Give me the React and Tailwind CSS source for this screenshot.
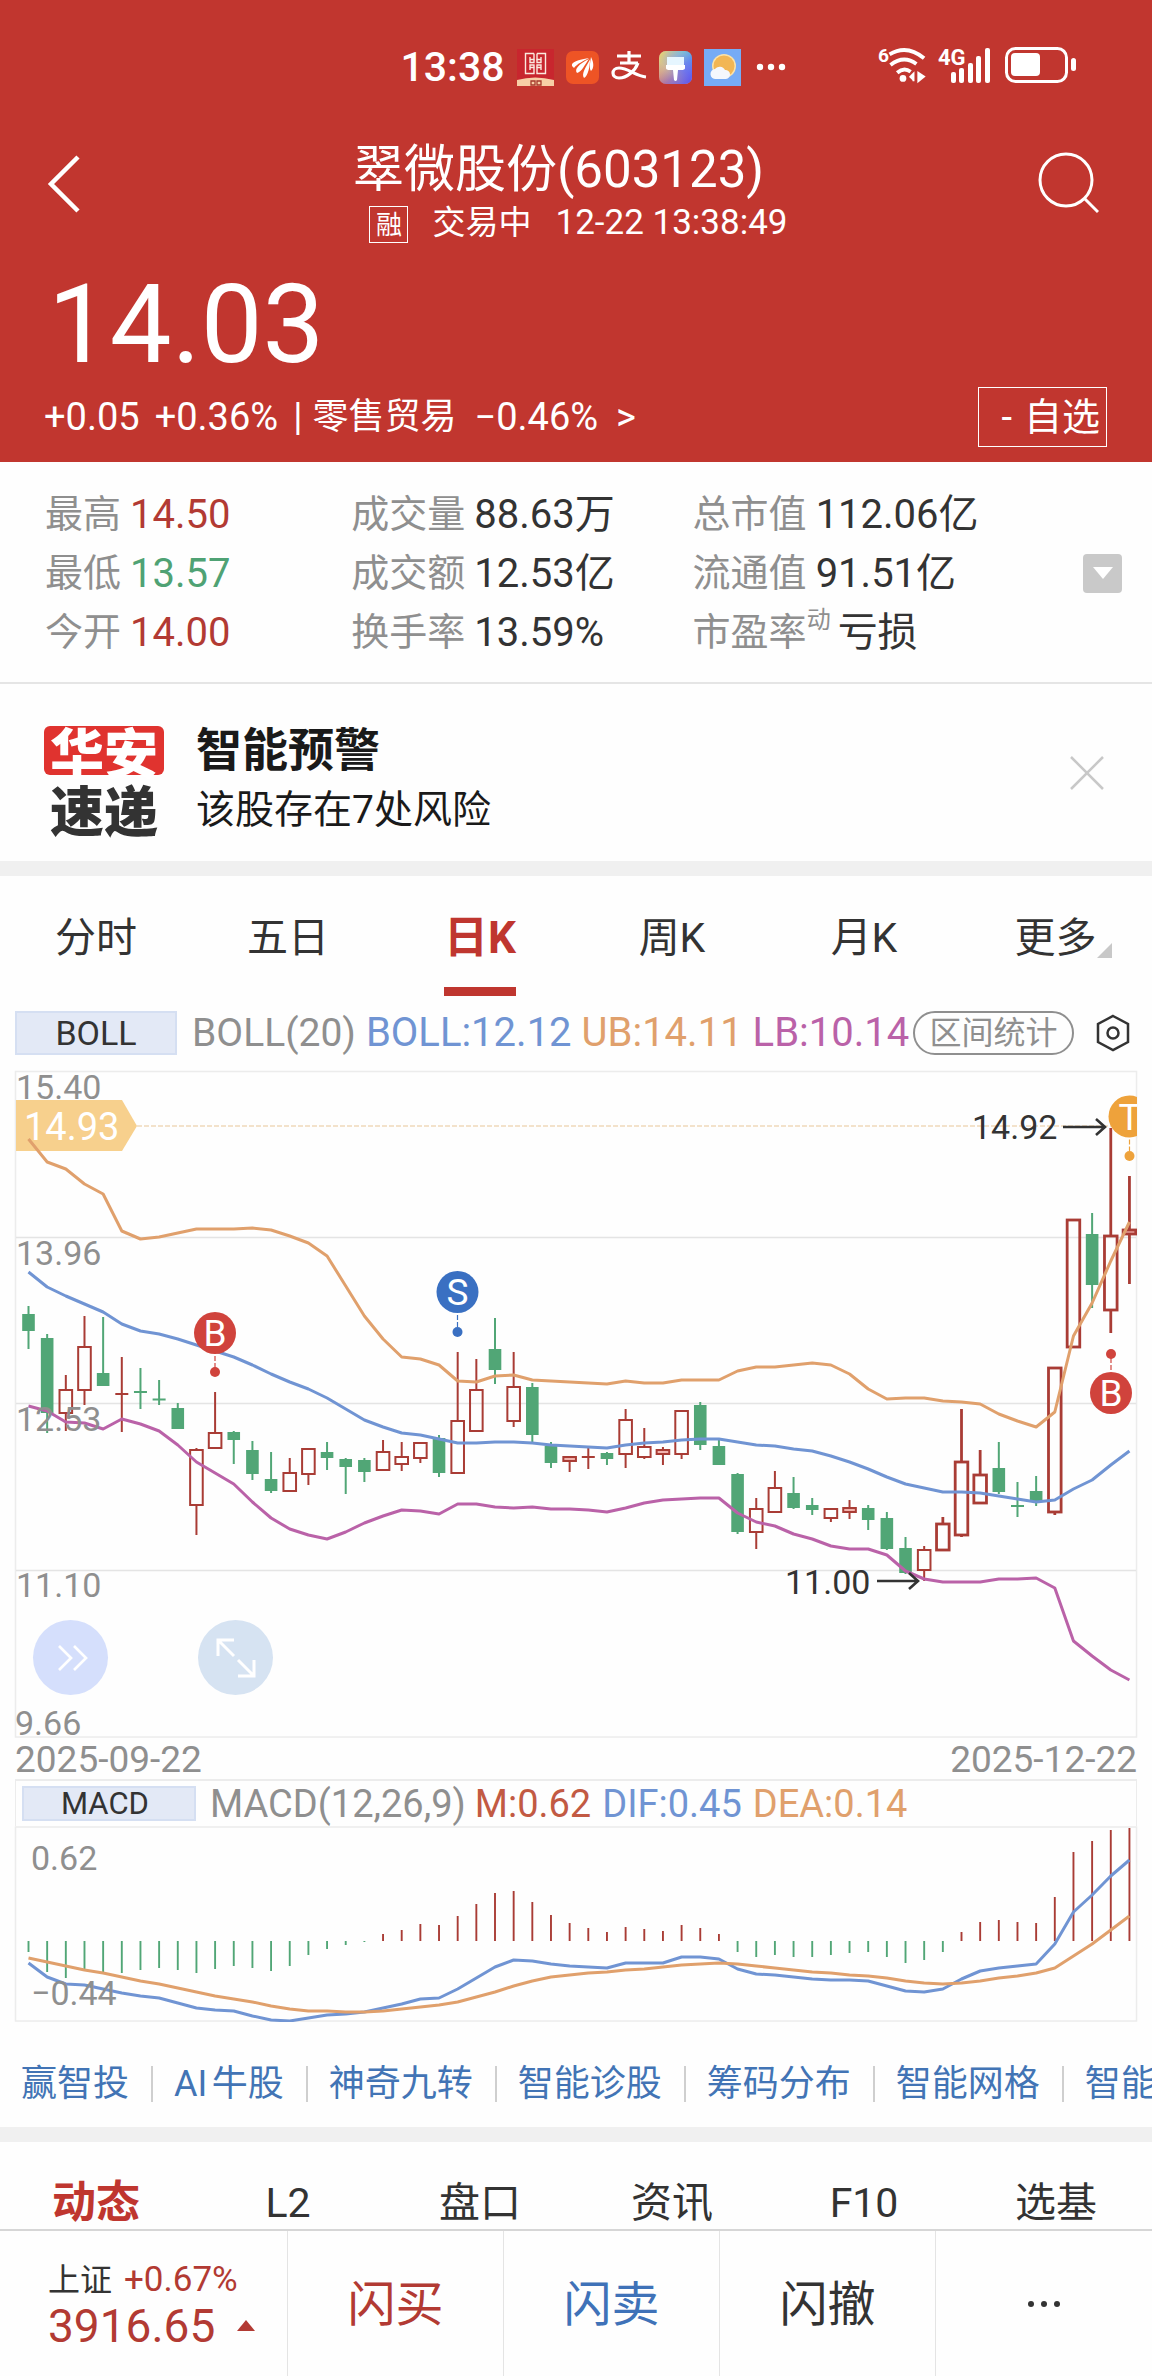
import React from "react";

const STEP = 18.66;
const X0 = 28.5;
const xAt = (i) => X0 + STEP * i;

// [direction, high, body top, body bottom, low]
const CANDLES = [
  ["g", 246, 254, 271, 289], ["g", 274, 278, 353, 373], ["r", 315, 330, 353, 371], ["r", 256, 287, 330, 345],
  ["g", 257, 313, 326, 326], ["r", 297, 334, 334, 372], ["g", 308, 332, 332, 349], ["g", 320, 339, 340, 345],
  ["g", 343, 348, 369, 369], ["r", 388, 390, 445, 475], ["r", 332, 373, 388, 388], ["g", 371, 372, 380, 404],
  ["g", 381, 390, 414, 420], ["g", 392, 419, 431, 433], ["r", 398, 413, 431, 432], ["r", 388, 389, 414, 425],
  ["g", 382, 392, 398, 410], ["g", 398, 399, 407, 434], ["g", 398, 400, 412, 422], ["r", 380, 392, 410, 410],
  ["r", 382, 397, 404, 411], ["r", 383, 383, 398, 403], ["g", 375, 378, 413, 417], ["r", 292, 361, 413, 413],
  ["r", 299, 330, 371, 371], ["g", 258, 289, 310, 324], ["r", 292, 327, 361, 367], ["g", 323, 327, 375, 382],
  ["g", 382, 386, 403, 408], ["r", 396, 397, 401, 412], ["r", 387, 397, 397, 409], ["g", 392, 393, 399, 405],
  ["r", 349, 360, 394, 408], ["r", 368, 387, 397, 399], ["r", 387, 390, 394, 405], ["r", 350, 351, 394, 399],
  ["g", 342, 345, 385, 390], ["g", 379, 386, 405, 405], ["g", 413, 414, 472, 474], ["r", 438, 449, 472, 489],
  ["r", 411, 428, 452, 452], ["g", 417, 433, 448, 449], ["g", 438, 445, 450, 455], ["r", 449, 449, 458, 462],
  ["r", 440, 448, 452, 459], ["g", 445, 448, 460, 470], ["g", 452, 458, 489, 490], ["g", 477, 488, 513, 514],
  ["r", 486, 490, 510, 521], ["r", 457, 464, 490, 490], ["r", 349, 402, 475, 477], ["r", 390, 415, 443, 443],
  ["g", 382, 408, 432, 434], ["g", 422, 445, 447, 457], ["g", 416, 431, 442, 446], ["r", 308, 308, 452, 455],
  ["r", 160, 160, 287, 287], ["g", 153, 174, 225, 248], ["r", 68, 176, 250, 273], ["r", 116, 170, 174, 224],
];

const UB = [79, 102, 109, 124, 134, 171, 179, 177, 173, 169, 169, 169, 168, 170, 176, 183, 196, 226, 256, 279, 297, 299, 305, 321, 322, 316, 315, 320, 321, 322, 323, 324, 321, 323, 323, 320, 320, 320, 311, 307, 307, 305, 303, 305, 314, 329, 339, 338, 338, 341, 342, 344, 354, 361, 367, 352, 276, 243, 201, 162];
const MID = [212, 227, 236, 244, 252, 264, 271, 274, 279, 285, 291, 297, 305, 314, 322, 329, 338, 349, 360, 367, 373, 375, 379, 383, 383, 382, 382, 383, 385, 386, 387, 388, 385, 383, 382, 380, 379, 379, 382, 385, 386, 389, 391, 396, 402, 409, 417, 424, 428, 432, 432, 433, 436, 439, 442, 440, 429, 420, 405, 391];
const LB = [346, 351, 362, 363, 369, 359, 364, 371, 385, 402, 413, 424, 442, 458, 469, 475, 479, 472, 463, 456, 450, 451, 454, 444, 444, 447, 448, 447, 449, 449, 450, 452, 448, 443, 440, 439, 438, 438, 453, 462, 466, 474, 479, 486, 489, 489, 495, 511, 519, 522, 522, 522, 519, 519, 518, 528, 581, 596, 610, 620];

const MACD_BARS = [126, 146, 152, 143, 146, 147, 144, 142, 144, 147, 143, 140, 142, 145, 140, 129, 123, 119, 116, 108, 104, 98, 99, 90, 78, 67, 65, 76, 89, 97, 102, 106, 101, 103, 105, 99, 102, 108, 126, 131, 129, 131, 131, 129, 127, 126, 131, 137, 134, 126, 106, 96, 94, 96, 97, 71, 26, 15, 4, 2];
const DIF = [137, 151, 158, 159, 163, 167, 170, 172, 177, 182, 184, 185, 190, 194, 195, 192, 189, 188, 186, 182, 178, 173, 172, 163, 152, 141, 134, 135, 138, 140, 141, 142, 137, 137, 137, 131, 131, 133, 143, 148, 149, 151, 153, 154, 154, 155, 160, 165, 166, 163, 153, 145, 142, 140, 138, 118, 86, 69, 50, 34];
const DEA = [132, 136, 140, 144, 147, 151, 155, 158, 162, 166, 170, 173, 176, 180, 183, 185, 185, 186, 186, 185, 183, 181, 179, 176, 171, 166, 160, 155, 151, 149, 147, 146, 144, 143, 141, 139, 138, 137, 138, 140, 142, 144, 146, 147, 149, 150, 152, 155, 157, 158, 157, 155, 152, 150, 147, 142, 130, 118, 104, 90];

const RED = "#a93c35";
const GREEN = "#51a676";

function Series({ data, color }) {
  const points = data.map((y, i) => `${xAt(i)},${y}`).join(" ");
  return <polyline points={points} fill="none" stroke={color} strokeWidth="3" strokeLinejoin="round" />;
}

function Candle({ index, data }) {
  const [dir, high, top, bottom, low] = data;
  const x = xAt(index);
  const color = dir === "g" ? GREEN : RED;
  const w = index > 48 && dir === "r" ? 2.8 : 2;
  if (bottom - top < 3) {
    return (
      <g stroke={color} strokeWidth={w}>
        <line x1={x} x2={x} y1={high} y2={low} />
        <line x1={x - 6.5} x2={x + 6.5} y1={(top + bottom) / 2} y2={(top + bottom) / 2} strokeWidth={w} />
      </g>
    );
  }
  return (
    <g stroke={color} strokeWidth={w}>
      <line x1={x} x2={x} y1={high} y2={top} />
      <line x1={x} x2={x} y1={bottom} y2={low} />
      {dir === "g" ? (
        <rect x={x - 6.3} y={top} width="12.6" height={bottom - top} fill={color} stroke="none" />
      ) : (
        <rect x={x - 6.3} y={top} width="12.6" height={bottom - top} fill={bottom - top < 5 ? "#f2b3ad" : "none"} />
      )}
    </g>
  );
}

function Marker({ x, y, dot, color, label }) {
  const from = dot > y ? y + 23 : y - 23;
  return (
    <g>
      <circle cx={x} cy={y} r="21" fill={color} />
      <line x1={x} x2={x} y1={from} y2={dot} stroke={color} strokeWidth="1.2" strokeDasharray="5 2" />
      <circle cx={x} cy={dot} r="5" fill={color} />
      <text x={x} y={y + 13} textAnchor="middle" fontSize="37" fill="#fff">{label}</text>
    </g>
  );
}

function Arrow({ x1, x2, y }) {
  return (
    <path d={`M${x1} ${y}H${x2}M${x2 - 9} ${y - 8}L${x2} ${y}L${x2 - 9} ${y + 8}`} fill="none" stroke="#333" strokeWidth="2.6" />
  );
}

function KChart() {
  return (
    <svg viewBox="0 0 1152 678" className="block w-full overflow-visible" role="img" aria-label="日K线图">
      <defs>
        <clipPath id="plot"><rect x="15" y="0" width="1122" height="678" /></clipPath>
      </defs>
      <g fill="none" stroke="#ececec" strokeWidth="1.5">
        <rect x="15.5" y="11.5" width="1121" height="665.5" />
        <path d="M16 177.5H1136M16 343.5H1136M16 510.5H1136" stroke="#e4e4e4" />
      </g>
      {CANDLES.map((c, i) => <g key={i} clipPath="url(#plot)"><Candle index={i} data={c} /></g>)}
      <Series data={MID} color="#7094d3" />
      <Series data={LB} color="#ba62a8" />
      <path d="M137 66H1128" stroke="#efd9ba" strokeWidth="1.5" strokeDasharray="5 2" />
      <path d="M16 40H122L137 66L122 91H16Z" fill="#f7d08d" />
      <Series data={UB} color="#e0a06c" />
      <text x="24" y="80" fontSize="38" fill="#fff">14.93</text>
      <g fontSize="34" fill="#8f8f8f">
        <text x="16" y="39">15.40</text>
        <text x="16" y="205">13.96</text>
        <text x="16" y="371">12.53</text>
        <text x="16" y="537">11.10</text>
        <text x="15" y="675">9.66</text>
      </g>
      <g fontSize="34" fill="#333">
        <text x="972" y="79">14.92</text>
        <text x="785" y="534">11.00</text>
      </g>
      <Arrow x1={1063} x2={1105} y={67} />
      <Arrow x1={877} x2={918} y={521} />
      <Marker x={215} y={273} dot={312} color="#d0433c" label="B" />
      <Marker x={457.5} y={232} dot={272} color="#3a70c2" label="S" />
      <Marker x={1111} y={333} dot={294} color="#d0433c" label="B" />
      <g clipPath="url(#plot)">
        <Marker x={1129.5} y={56.5} dot={96} color="#eea23b" label="T" />
      </g>
    </svg>
  );
}

function MacdChart() {
  return (
    <svg viewBox="0 0 1152 196" className="block w-full" role="img" aria-label="MACD">
      <rect x="15.5" y="1" width="1121" height="194" fill="none" stroke="#ececec" strokeWidth="1.5" />
      {MACD_BARS.map((y, i) => (
        <line key={i} x1={xAt(i)} x2={xAt(i)} y1="115" y2={y} stroke={y > 115 ? GREEN : RED} strokeWidth="1.9" />
      ))}
      <Series data={DIF} color="#7094d3" />
      <Series data={DEA} color="#e0a06c" />
      <g fontSize="34" fill="#8f8f8f">
        <text x="31" y="44">0.62</text>
        <text x="31" y="179">−0.44</text>
      </g>
    </svg>
  );
}

function StatusBar() {
  return (
    <div className="grid h-[130px] grid-cols-[1fr_auto_1fr] items-center">
      <span />
      <div className="flex items-center gap-3 pt-1 pl-[34px]">
        <span className="text-[41px] leading-[48px] font-medium">13:38</span>
        <svg width="37" height="37" viewBox="0 0 37 37">
          <rect width="37" height="37" fill="#c8262e" />
          <g fill="none" stroke="#fbe9df" strokeWidth="1.4">
            <path d="M17 4.500H8.500V24.500H17V18.500H13M20 4.500H28.500V24.500H20V18.500H24M17 4.500V10.500H13M20 4.500V10.500H24" />
            <path d="M13 8V13.500H17V10.500M24 8V13.500H20V10.500M13 21V16H17V18.500M24 21V16H20V18.500" />
          </g>
          <path d="M0 31Q18 26 37 31V37H0Z" fill="#f8cfa6" />
          <path d="M14 32h4v4h-4zM20 32h4v4h-4z" fill="none" stroke="#a5382c" strokeWidth="1.3" />
        </svg>
        <svg width="33" height="33" viewBox="0 0 33 33">
          <rect width="33" height="33" rx="7" fill="#ee5425" />
          <g fill="#fff">
            <path d="M6 15C5 11 12 9 23 7C17 10 11 13 8 17Z" />
            <path d="M11 22C8 18 13 13 23 8C19 13 16 21 11 22Z" />
            <path d="M18 27C15 23 20 16 24 8.500C24 15 22 25 18 27Z" />
            <path d="M25 20C23 18 24 12 25 6C28 12 28 17 25 20Z" />
          </g>
        </svg>
        <svg width="36" height="34" viewBox="0 0 36 34" fill="none" stroke="#fff" strokeWidth="3.200">
          <path d="M6 6H30M18 1V13M9 13H27" />
          <path d="M27 13C24 21 16 28 8 28C0 28 0 18 8 18C17 18 25 26 35 27" />
        </svg>
        <svg width="33" height="33" viewBox="0 0 33 33">
          <defs>
            <linearGradient id="brush" x1="0" y1="1" x2="1" y2="0">
              <stop offset="0" stopColor="#f4655c" /><stop offset=".35" stopColor="#e9a08a" /><stop offset=".6" stopColor="#8f8fe8" /><stop offset="1" stopColor="#4cc4ee" />
            </linearGradient>
            <linearGradient id="brushTop" x1="0" y1="0" x2="1" y2="1">
              <stop offset="0" stopColor="#f9d85c" /><stop offset=".35" stopColor="#b0d8b0" stopOpacity=".4" /><stop offset=".6" stopColor="#5a6cf0" stopOpacity=".5" /><stop offset="1" stopColor="#5a50f0" />
            </linearGradient>
          </defs>
          <rect width="33" height="33" rx="7" fill="url(#brush)" />
          <rect width="33" height="33" rx="7" fill="url(#brushTop)" />
          <path d="M8 6H25V14H8Z" fill="#e6f6ff" />
          <path d="M7 14H26V17Q26 19 22 19H19L18 29Q16.500 31 15 29L14 19H11Q7 19 7 17Z" fill="#fff" />
        </svg>
        <svg width="37" height="37" viewBox="0 0 37 37">
          <rect width="37" height="37" fill="#76abf5" />
          <circle cx="20" cy="17" r="12" fill="#fbe2a8" />
          <circle cx="20" cy="17" r="10.500" fill="#f2b654" />
          <path d="M12 30a5 5 0 0 1-1-10a6 6 0 0 1 10 1a4.500 4.500 0 0 1 1 9Z" fill="#f4f7fd" />
        </svg>
        <svg width="33" height="8" viewBox="0 0 33 8" fill="#fff">
          <circle cx="7" cy="4" r="3.200" /><circle cx="18" cy="4" r="3.200" /><circle cx="29" cy="4" r="3.200" />
        </svg>
      </div>
      <div className="flex items-center justify-end gap-3 pr-[76px]">
        <svg width="48" height="38" viewBox="0 0 50 38" className="overflow-visible" fill="none" stroke="#fff" strokeWidth="4">
          <text x="0" y="16" fontSize="20" fontWeight="700" fill="#fff" stroke="none">6</text>
          <path d="M12 8Q30 -3 48 12M13 19Q27 8 40 18M20 27Q27 21 34 26" />
          <circle cx="26" cy="33" r="3.500" fill="#fff" stroke="none" />
          <path d="M37 36V28l-4 4M42 27v9l6-5z" strokeWidth="2" fill="#fff" />
        </svg>
        <svg width="54" height="38" viewBox="0 0 54 38" fill="#fff" className="overflow-visible">
          <text x="0" y="19" fontSize="22" fontWeight="700">4G</text>
          <rect x="13" y="26" width="5" height="11" rx="2" /><rect x="21" y="22" width="5" height="15" rx="2" />
          <rect x="30" y="17" width="5" height="20" rx="2" /><rect x="38" y="10" width="5" height="27" rx="2" />
          <rect x="47" y="2" width="5" height="35" rx="2" />
        </svg>
        <svg width="72" height="38" viewBox="0 0 72 38">
          <rect x="2.500" y="2.500" width="60" height="33" rx="9" fill="none" stroke="#fff" strokeWidth="3" />
          <rect x="7" y="7" width="29" height="23" rx="4" fill="#fff" />
          <rect x="67" y="12" width="5" height="13" rx="2.500" fill="#fff" />
        </svg>
      </div>
    </div>
  );
}

const STATS = [
  [["最高", "14.50", "text-[#b23a33]"], ["最低", "13.57", "text-[#4fa274]"], ["今开", "14.00", "text-[#b23a33]"]],
  [["成交量", "88.63万"], ["成交额", "12.53亿"], ["换手率", "13.59%"]],
  [["总市值", "112.06亿"], ["流通值", "91.51亿"], ["市盈率", "亏损"]],
];

const LINKS = ["赢智投", "AI牛股", "神奇九转", "智能诊股", "筹码分布", "智能网格", "智能条件"];

export default function App() {
  return (
    <div className="w-full overflow-hidden bg-[#fefefe] font-['Roboto','Noto_Sans_CJK_SC',sans-serif] text-[#333]">
      <header className="h-[462px] bg-[#c1362f] text-white">
        <StatusBar />
        <div className="flex h-[124px] items-start justify-between pr-[53px] pl-[46px]">
          <button type="button" aria-label="返回" className="mt-6">
            <svg width="36" height="60" viewBox="0 0 36 60" fill="none" stroke="#fff" strokeWidth="4.500"><path d="M32 3L5 30L32 57" /></svg>
          </button>
          <div className="flex flex-col items-center pt-2">
            <h1 className="text-[51px] leading-[64px]">翠微股份(603123)</h1>
            <div className="flex items-center gap-[24px] pl-10 text-[35px] leading-10">
              <span className="mt-1 flex h-[37px] w-[39px] items-center justify-center border border-white text-[26px]">融</span>
              <span className="text-[33px]">交易中</span>
              <span>12-22 13:38:49</span>
            </div>
          </div>
          <button type="button" aria-label="搜索" className="mt-5">
            <svg width="64" height="64" viewBox="0 0 64 64" fill="none" stroke="#fff" strokeWidth="3"><circle cx="31" cy="30" r="26" /><path d="M49 48L63 62" /></svg>
          </button>
        </div>
        <p className="h-[133px] pl-[48px] text-[110px] leading-[142px]">14.03</p>
        <div className="flex items-center justify-between pr-[45px] pl-[44px]">
          <p className="flex items-center gap-[15px] text-[38px] leading-[48px]">
            <span>+0.05</span>
            <span>+0.36%</span>
            <a href="#sector" className="flex items-center gap-[18px]">
              <span className="flex items-center gap-[10px]"><span>|</span><span className="text-[36px]">零售贸易</span></span>
              <span>−0.46%</span>
              <span>&gt;</span>
            </a>
          </p>
          <button type="button" className="flex h-[60px] w-[129px] items-center justify-end gap-3 border border-white pr-[6px] text-[38px] leading-none whitespace-nowrap"><span>-</span><span>自选</span></button>
        </div>
      </header>

      <section className="flex h-[222px] items-center border-b-2 border-[#e5e5e5] pt-[2px] pr-[30px] pl-[45px]">
        <div className="grid flex-1 grid-cols-[306fr_341fr_390fr] text-[40px] leading-[59px]">
          {STATS.map((col, i) => (
            <dl key={i}>
              {col.map(([label, value, tone]) => (
                <div key={label} className="flex items-center gap-[9px] whitespace-nowrap">
                  <dt className="flex text-[38px] text-[#8f8f8f]">
                    {label}
                    {label === "市盈率" && <sup className="static -mr-[2px] text-[24px] leading-[34px]">动</sup>}
                  </dt>
                  <dd className={tone}>{value}</dd>
                </div>
              ))}
            </dl>
          ))}
        </div>
        <button type="button" aria-label="展开" className="flex size-[39px] items-center justify-center rounded-sm bg-[#c9c9c9]">
          <svg width="20" height="12" viewBox="0 0 20 12" fill="#fff"><path d="M0 0H20L10 12Z" /></svg>
        </button>
      </section>

      <section className="flex h-[177px] items-center gap-[32px] pr-[48px] pl-[44px]">
        <div className="flex w-[120px] flex-col gap-[9px] pt-[14px] text-center font-['Noto_Sans_CJK_SC',sans-serif] text-[54px] leading-[49px] font-black">
          <span className="rounded-md bg-[#e0332f] text-white">华安</span>
          <span>速递</span>
        </div>
        <div className="flex-1 pt-[14px] text-[#1a1a1a]">
          <h2 className="text-[46px] leading-[60px] font-bold">智能预警</h2>
          <p className="text-[39px] leading-[60px]">该股存在7处风险</p>
        </div>
        <button type="button" aria-label="关闭">
          <svg width="34" height="34" viewBox="0 0 34 34" fill="none" stroke="#c8c8c8" strokeWidth="2.500"><path d="M1 1L33 33M33 1L1 33" /></svg>
        </button>
      </section>
      <div className="h-[15px] bg-[#f0f0f0]" />

      <nav className="grid h-[122px] grid-cols-6 pt-[28px] text-[41px] leading-[68px]">
        {["分时", "五日", "日K", "周K", "月K", "更多"].map((t) => (
          <button type="button" key={t} className={t === "日K" ? "flex flex-col items-center text-[44px] font-bold text-[#bf362f]" : "flex flex-col items-center"}>
            <span className={t === "更多" ? "flex items-center pl-[14px]" : ""}>
              {t}
              {t === "更多" && <svg className="mt-6" width="15" height="15" viewBox="0 0 15 15" fill="#c8c8c8"><path d="M15 0V15H0Z" /></svg>}
            </span>
            {t === "日K" && <span className="mt-[15px] h-[9px] w-[72px] bg-[#bf362f]" />}
          </button>
        ))}
      </nav>

      <div className="flex h-[62px] items-center pt-[8px] pr-[21px] pl-[15px] text-[40px] leading-[44px] whitespace-nowrap">
        <button type="button" className="h-[44px] w-[162px] border-2 border-[#d5dff2] bg-[#e3e9f6] text-[34px] leading-[40px]">BOLL</button>
        <span className="ml-[15px] text-[39px] text-[#8f8f8f]">BOLL(20)</span>
        <span className="ml-[10px] text-[#7094d3]">BOLL:12.12</span>
        <span className="ml-[10px] text-[#e0a06c]">UB:14.11</span>
        <span className="ml-[10px] text-[#ba62a8]">LB:10.14</span>
        <button type="button" className="ml-auto h-[44px] w-[161px] rounded-full border-2 border-[#8f8f8f] text-[32px] leading-[40px] text-[#8f8f8f]">区间统计</button>
        <button type="button" aria-label="设置" className="ml-[21px]">
          <svg width="36" height="38" viewBox="0 0 36 38" fill="none" stroke="#333" strokeWidth="2.500"><path d="M18 2L33 10V28L18 36L3 28V10Z" /><circle cx="18" cy="19" r="5.500" /></svg>
        </button>
      </div>

      <div className="relative">
        <KChart />
        <div className="absolute bottom-[43px] left-[33px] flex gap-[90px]">
          <button type="button" aria-label="后移" className="flex size-[75px] items-center justify-center rounded-full bg-[#d5dffc]">
            <svg width="30" height="26" viewBox="0 0 30 26" className="ml-1" fill="none" stroke="#fff" strokeWidth="2.700"><path d="M1 1L13 13L1 25M16 1L28 13L16 25" /></svg>
          </button>
          <button type="button" aria-label="全屏" className="flex size-[75px] items-center justify-center rounded-full bg-[#d6e3f2]">
            <svg width="40" height="40" viewBox="0 0 40 40" fill="none" stroke="#fff" strokeWidth="3"><path d="M2 18V2H18M2 2L18 18M38 22V38H22M38 38L22 22" /></svg>
          </button>
        </div>
      </div>

      <div className="flex h-[41px] items-center justify-between px-[15px] pt-[2px] text-[37px] leading-none text-[#8f8f8f]">
        <span>2025-09-22</span>
        <span>2025-12-22</span>
      </div>
      <div className="mx-[15px] flex h-[47px] items-center border-x border-t-2 border-[#ececec] pl-[6px] text-[38px] leading-[44px]">
        <button type="button" className="h-[35px] w-[174px] border-2 border-[#d5dff2] bg-[#e3e9f6] pr-2 text-[31px] leading-[30px]">MACD</button>
        <span className="ml-[14px] text-[#8f8f8f]">MACD(12,26,9)</span>
        <span className="ml-[9px] text-[#c25a43]">M:0.62</span>
        <span className="ml-[11px] text-[#7094d3]">DIF:0.45</span>
        <span className="ml-[11px] text-[#e0a06c]">DEA:0.14</span>
      </div>
      <MacdChart />

      <nav className="flex h-[105px] items-center overflow-hidden pt-[18px] pl-[21px] text-[36px] leading-10 whitespace-nowrap text-[#4274b5] [text-autospace:normal]">
        {LINKS.map((t, i) => (
          <React.Fragment key={t}>
            {i > 0 && <span className="mr-[21px] ml-[22px] h-9 w-[2px] shrink-0 bg-[#cfcfcf]" />}
            <a href={`#tool-${i}`} className="shrink-0">{t}</a>
          </React.Fragment>
        ))}
      </nav>
      <div className="h-[15px] bg-[#f0f0f0]" />

      <nav className="grid h-[89px] grid-cols-6 border-b-2 border-[#d6d6d6] pt-[31px] text-[41px] leading-[60px]">
        {["动态", "L2", "盘口", "资讯", "F10", "选基"].map((t) => (
          <button type="button" key={t} className={t === "动态" ? "text-[44px] font-bold text-[#bf362f]" : ""}>{t}</button>
        ))}
      </nav>

      <footer className="grid h-[145px] grid-cols-[4fr_3fr_3fr_3fr_3fr] divide-x divide-[#e4e4e4] text-[48px]">
        <a href="#index" className="flex flex-col justify-center pt-[2px] pl-12 text-[#b23a33]">
          <span className="flex items-center gap-[12px] text-[35px] leading-[42px]"><span className="text-[32px] text-[#333]">上证</span>+0.67%</span>
          <span className="flex items-center gap-[22px] text-[46px] leading-[50px]">
            3916.65
            <svg width="18" height="11" viewBox="0 0 18 11" fill="#b23a33"><path d="M9 0L18 11H0Z" /></svg>
          </span>
        </a>
        <button type="button" className="pt-[2px] text-[#b23a33]">闪买</button>
        <button type="button" className="pt-[2px] text-[#3f72b8]">闪卖</button>
        <button type="button" className="pt-[2px]">闪撤</button>
        <button type="button" aria-label="更多" className="flex items-center justify-center">
          <svg width="36" height="8" viewBox="0 0 36 8" fill="#333"><circle cx="5" cy="4" r="3" /><circle cx="18" cy="4" r="3" /><circle cx="31" cy="4" r="3" /></svg>
        </button>
      </footer>
    </div>
  );
}
